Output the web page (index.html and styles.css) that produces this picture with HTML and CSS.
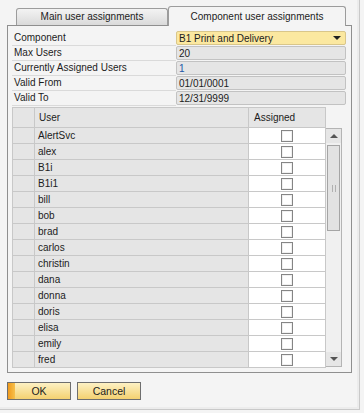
FILE: index.html
```html
<!DOCTYPE html>
<html lang="en">
<head>
    <meta charset="UTF-8">
    <title>Component user assignments</title>
    <link rel="stylesheet" href="styles.css">
</head>
<body>
<div class="window">
    <div class="tabs">
        <div class="tab">Main user assignments</div>
        <div class="tab active">Component user assignments</div>
    </div>

    <div class="panel">
        <div class="form">
            <div class="label">Component</div>
            <div class="field combo">B1 Print and Delivery<span class="arrow"></span></div>
            <div class="label">Max Users</div>
            <div class="field">20</div>
            <div class="label">Currently Assigned Users</div>
            <div class="field blue">1</div>
            <div class="label">Valid From</div>
            <div class="field">01/01/0001</div>
            <div class="label">Valid To</div>
            <div class="field">12/31/9999</div>
        </div>

        <div class="grid">
            <table class="users">
                <thead>
                    <tr><th class="num"></th><th class="user">User</th><th class="assigned">Assigned</th></tr>
                </thead>
                <tbody>
                    <tr><td class="num"></td><td class="user">AlertSvc</td><td class="check"><span class="box"></span></td></tr>
                    <tr><td class="num"></td><td class="user">alex</td><td class="check"><span class="box"></span></td></tr>
                    <tr><td class="num"></td><td class="user">B1i</td><td class="check"><span class="box"></span></td></tr>
                    <tr><td class="num"></td><td class="user">B1i1</td><td class="check"><span class="box"></span></td></tr>
                    <tr><td class="num"></td><td class="user">bill</td><td class="check"><span class="box"></span></td></tr>
                    <tr><td class="num"></td><td class="user">bob</td><td class="check"><span class="box"></span></td></tr>
                    <tr><td class="num"></td><td class="user">brad</td><td class="check"><span class="box"></span></td></tr>
                    <tr><td class="num"></td><td class="user">carlos</td><td class="check"><span class="box"></span></td></tr>
                    <tr><td class="num"></td><td class="user">christin</td><td class="check"><span class="box"></span></td></tr>
                    <tr><td class="num"></td><td class="user">dana</td><td class="check"><span class="box"></span></td></tr>
                    <tr><td class="num"></td><td class="user">donna</td><td class="check"><span class="box"></span></td></tr>
                    <tr><td class="num"></td><td class="user">doris</td><td class="check"><span class="box"></span></td></tr>
                    <tr><td class="num"></td><td class="user">elisa</td><td class="check"><span class="box"></span></td></tr>
                    <tr><td class="num"></td><td class="user">emily</td><td class="check"><span class="box"></span></td></tr>
                    <tr><td class="num"></td><td class="user">fred</td><td class="check"><span class="box"></span></td></tr>
                </tbody>
            </table>
            <div class="scrollbar">
                <div class="sb-btn"><span class="up"></span></div>
                <div class="thumb"><span class="grip"></span></div>
                <div class="track"></div>
                <div class="sb-btn down-btn"><span class="down"></span></div>
            </div>
        </div>
    </div>

    <div class="buttons">
        <button class="btn default">OK</button>
        <button class="btn">Cancel</button>
    </div>
</div>
</body>
</html>
```

FILE: styles.css
```css
/* dialog */
body { margin: 0; background: #f4f4f4; font-family: 'Liberation Sans', Arial, sans-serif; font-size: 10px; color: #1c1c1c; }
.window { width: 359px; height: 409px; border-right: 1px solid #c9c9c9; border-bottom: 1px solid #c9c9c9; box-shadow: inset -2px -2px 0 #ececec; }

.tabs { display: flex; align-items: flex-end; height: 25px; padding-left: 16px; }
.tab { width: 150px; height: 16px; line-height: 16px; text-align: center; border: 1px solid #9c9c9c; border-bottom: none; border-radius: 3px 3px 0 0; background: linear-gradient(#f3f3f3, #dadada); }
.tab.active { width: 176px; height: 19px; line-height: 19px; background: #f4f4f4; margin-bottom: -1px; position: relative; z-index: 1; }

.panel { width: 343px; height: 346px; margin-left: 7px; border: 1px solid #8f8f8f; padding: 5px 0 0 4px; box-sizing: border-box; height: 348px; width: 345px; }

.form { display: grid; grid-template-columns: 164px 170px; grid-auto-rows: 15px; }
.label { border-bottom: 1px solid #dadada; padding-left: 2px; line-height: 14px; }
.field { position: relative; height: 14px; line-height: 13px; box-sizing: border-box; border: 1px solid #c2c2c2; border-radius: 2px; background: #e5e5e5; padding-left: 2px; }
.field.blue { color: #2358a8; }
.field.combo { background: #fbe8a0; border-color: #d9c68a; }
.arrow { position: absolute; right: 4px; top: 4px; border-left: 4px solid transparent; border-right: 4px solid transparent; border-top: 4px solid #202020; }

.grid { display: flex; align-items: flex-start; margin-top: 1px; }
.users { border-collapse: collapse; width: 314px; table-layout: fixed; }
.users th, .users td { border: 1px solid #c8c8c8; padding: 0; font-weight: normal; text-align: left; }
.users th { height: 19px; background: #e5e5e5; }
.users td { height: 15px; background: #e5e5e5; }
.users .num { width: 21px; }
.users th.user { width: 209px; padding-left: 4px; }
.users td.user { padding-left: 3px; }
.users th.assigned { padding-left: 5px; }
.users td.check { background: #fff; text-align: center; }
.box { display: inline-block; width: 10px; height: 10px; border: 1px solid #858585; vertical-align: middle; background: #fff; box-shadow: inset 0 0 0 1px #f0f0f0; }

.scrollbar { display: flex; flex-direction: column; width: 16px; height: 239px; margin-top: 21px; box-sizing: border-box; border: 1px solid #b4b4b4; border-left: none; background: #f0f0f0; }
.sb-btn { height: 14px; display: flex; align-items: center; justify-content: center; background: #e6e6e6; }
.down-btn { margin-top: auto; }
.up { border-left: 4px solid transparent; border-right: 4px solid transparent; border-bottom: 4px solid #555; }
.down { border-left: 4px solid transparent; border-right: 4px solid transparent; border-top: 4px solid #555; }
.thumb { height: 84px; margin: 2px 1px 0; border: 1px solid #a5a5a5; background: #e2e2e2; display: flex; align-items: center; justify-content: center; }
.grip { width: 5px; height: 7px; background-image: radial-gradient(circle, #b0b0b0 0.8px, transparent 1px); background-size: 3px 2px; }

.buttons { display: flex; gap: 6px; margin: 9px 0 0 7px; }
.btn { width: 64px; height: 18px; padding: 0; border: 1px solid #6e6e6e; font: inherit; font-size: 10.5px; color: #1c1c1c; background: linear-gradient(#fdf1c4, #f4d170); }
.btn.default { background: linear-gradient(90deg, #f09a1c, #f6c04c 7px, transparent 7px), linear-gradient(#fdf1c4, #f4d170); }
```
